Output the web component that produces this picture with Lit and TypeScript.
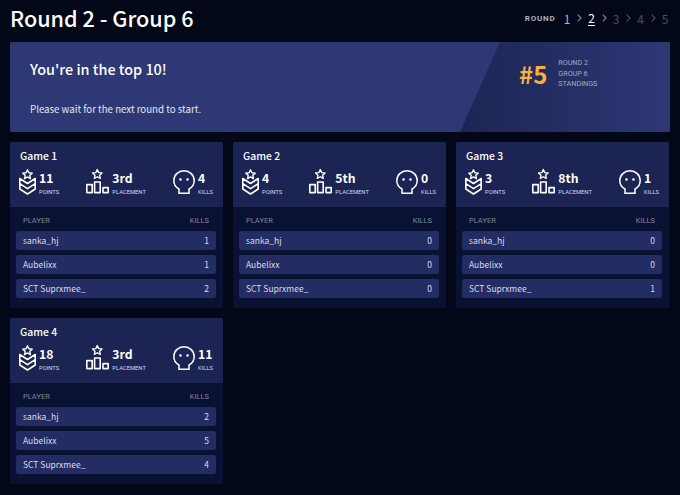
import { LitElement, html, css, svg } from "lit";
import { customElement } from "lit/decorators.js";

const games = [
  { name: "Game 1", points: 11, place: "3rd", kills: 4, k: [1, 1, 2] },
  { name: "Game 2", points: 4, place: "5th", kills: 0, k: [0, 0, 0] },
  { name: "Game 3", points: 3, place: "8th", kills: 1, k: [0, 0, 1] },
  { name: "Game 4", points: 18, place: "3rd", kills: 11, k: [2, 5, 4] },
];
const players = ["sanka_hj", "Aubelixx", "SCT Suprxmee_"];
const star = "M0 -5.6 L1.7 -2 L5.6 -1.6 L2.7 1 L3.5 4.8 L0 2.9 L-3.5 4.8 L-2.7 1 L-5.6 -1.6 L-1.7 -2 Z";

const pointsIcon = svg`<svg class="i" width="17" height="27" viewBox="0 0 17 27" fill="none" stroke="#fff" stroke-width="1.6" stroke-linejoin="round"><path transform="translate(8.5 6.5) scale(.85)" d="${star}"/><path d="M.8 10.5 V21 L8.5 26 L16.2 21 V10.5 L8.5 15.5 Z M.8 15.7 L8.5 20.7 L16.2 15.7"/></svg>`;
const placeIcon = svg`<svg class="i" width="23" height="26" viewBox="0 0 23 26" fill="none" stroke="#fff" stroke-width="1.6" stroke-linejoin="round"><path transform="translate(11.3 6.3) scale(.85)" d="${star}"/><rect x=".8" y="16.6" width="5.4" height="8"/><rect x="8.6" y="14" width="5.6" height="10.6"/><rect x="17" y="19.6" width="5.2" height="5"/></svg>`;
const skullIcon = svg`<svg class="i skull" width="22" height="24" viewBox="0 0 22 24" fill="none" stroke="#fff" stroke-width="1.5"><path d="M6 19 C2.8 17.5 .8 14.5 .8 10.6 C.8 5 5.3 .8 11 .8 C16.7 .8 21.2 5 21.2 10.6 C21.2 14.5 19.2 17.5 16 19 V23.2 H6 Z"/><circle cx="7.5" cy="9.5" r="1.3" fill="#fff" stroke="none"/><circle cx="14.5" cy="9.5" r="1.3" fill="#fff" stroke="none"/></svg>`;

@customElement("app-root")
export class AppRoot extends LitElement {
  static styles = css`
    :host {
      display: block;
      width: 680px;
      height: 495px;
      overflow: hidden;
      box-sizing: border-box;
      padding: 0 10px;
      background: #020817;
      color: #fff;
      font-family: "Noto Sans CJK SC", "Noto Sans", sans-serif;
    }
    .top { display: flex; justify-content: space-between; align-items: center; height: 42px; padding-bottom: 6px; box-sizing: border-box; }
    h1 { margin: 0; font-size: 21.6px; font-weight: 500; line-height: 36px; }
    .rounds { display: flex; align-items: center; font-size: 12px; color: #4a5063; margin-right: 1.5px; }
    .rounds .lbl { font-family: Roboto, sans-serif; font-weight: 700; font-size: 8px; letter-spacing: .8px; color: #aab0c0; margin-right: 8px; }
    .rounds .n { width: 7px; text-align: center; line-height: 15px; }
    .rounds .seen { color: #aab0c0; }
    .rounds .cur { color: #fff; border-bottom: 1px solid #fff; }
    .rounds svg { margin: 0 6px 0 6.5px; }
    .banner {
      height: 90px; border-radius: 2px; background: #2d3875;
      display: flex; justify-content: space-between; overflow: hidden;
    }
    .msg { padding: 17px 20px; }
    .msg h2 { margin: 0; font-size: 14.4px; font-weight: 500; line-height: 20px; }
    .msg p { margin: 22px 0 0; font-size: 9.7px; line-height: 16px; color: #e6e8f0; }
    .standing {
      width: 210px; display: flex; align-items: flex-start; padding: 16px 0 0 59px; box-sizing: border-box; gap: 11px;
      background: linear-gradient(90deg, #1d2553 0%, #2d3875 100%);
      clip-path: polygon(40px 0, 100% 0, 100% 100%, 0 100%);
    }
    .rank { font-size: 24px; font-weight: 700; color: #f9b13b; line-height: 32px; }
    .info { font-family: Roboto, sans-serif; font-size: 7.2px; line-height: 10.5px; color: #a3a9c2; }
    .grid { display: grid; grid-template-columns: repeat(3, 213px); gap: 10px; margin-top: 10px; }
    .card { background: #0a1233; border-radius: 2px; height: 166px; }
    .head { background: #1b2453; height: 65px; box-sizing: border-box; padding: 5px 10px 0 9px; border-radius: 2px 2px 0 0; }
    .title { font-size: 10.4px; font-weight: 500; line-height: 18px; padding-left: 1px; }
    .stats { display: flex; justify-content: space-between; margin-top: 3px; align-items: flex-start; }
    .stat { display: flex; align-items: flex-start; gap: 3px; }
    .i { display: block; flex: none; }
    .skull { margin-top: 2px; }
    .val { font-size: 12.2px; font-weight: 700; line-height: 16px; margin-top: 2px; }
    .cap { font-family: Roboto, sans-serif; font-size: 5.8px; line-height: 8px; color: #d5d8e6; margin-top: 2px; }
    .table { padding: 9px 7px 0 6px; }
    .thead { display: flex; justify-content: space-between; padding: 0 7px; font-family: Roboto, sans-serif; font-size: 7.5px; line-height: 10px; color: #7f869f; margin-bottom: 5px; }
    .row {
      display: flex; justify-content: space-between; align-items: center; height: 19px; margin-bottom: 5px; box-sizing: border-box;
      padding: 0 7px 1px; background: #232c63; border-radius: 2px; font-size: 8.5px; color: #d9dce8;
    }
  `;

  render() {
    return html`
      <div class="top">
        <h1>Round 2 - Group 6</h1>
        <div class="rounds">
          <span class="lbl">ROUND</span>
          ${[1, 2, 3, 4, 5].map((n) => html`
            <span class="n ${n === 1 ? "seen" : ""} ${n === 2 ? "cur" : ""}">${n}</span>
            ${n < 5 ? svg`<svg width="5" height="8" viewBox="0 0 5 8" fill="none" stroke="${n < 3 ? "#7b8194" : "#4a5063"}" stroke-width="1.2"><path d="M.7 .7 L4 4 L.7 7.3"/></svg>` : ""}
          `)}
        </div>
      </div>
      <div class="banner">
        <div class="msg">
          <h2>You're in the top 10!</h2>
          <p>Please wait for the next round to start.</p>
        </div>
        <div class="standing">
          <div class="rank">#5</div>
          <div class="info">ROUND 2<br />GROUP 6<br />STANDINGS</div>
        </div>
      </div>
      <div class="grid">
        ${games.map((g) => html`
          <div class="card">
            <div class="head">
              <div class="title">${g.name}</div>
              <div class="stats">
                <div class="stat">${pointsIcon}<div><div class="val">${g.points}</div><div class="cap">POINTS</div></div></div>
                <div class="stat">${placeIcon}<div><div class="val">${g.place}</div><div class="cap">PLACEMENT</div></div></div>
                <div class="stat">${skullIcon}<div><div class="val">${g.kills}</div><div class="cap">KILLS</div></div></div>
              </div>
            </div>
            <div class="table">
              <div class="thead"><span>PLAYER</span><span>KILLS</span></div>
              ${players.map((p, i) => html`<div class="row"><span>${p}</span><span>${g.k[i]}</span></div>`)}
            </div>
          </div>
        `)}
      </div>
    `;
  }
}
